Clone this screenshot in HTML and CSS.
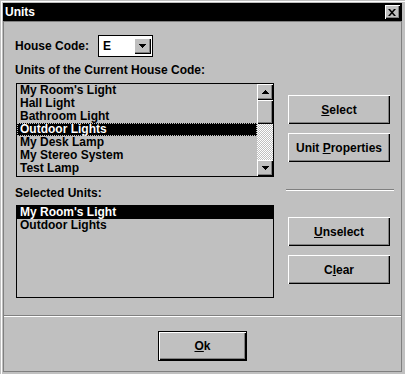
FILE: index.html
```html
<!DOCTYPE html>
<html lang="en">

<head>
  <meta charset="UTF-8" />
  <title>Units</title>

  <link rel="stylesheet" href="styles.css">
</head>

<body>
  <div class="window">
    <div class="titlebar">
      <span class="title">Units</span>
      <span class="close">
        <svg width="8" height="7" viewBox="0 0 8 7"><path d="M0 0h2l2 2.2L6 0h2L5 3.5 8 7H6L4 4.8 2 7H0l3-3.5z" /></svg>
      </span>
    </div>

    <div class="client">
      <div class="top">
        <div class="field-row">
          <span class="field-label">House Code:</span>
          <div class="combo">
            <span class="combo-value">E</span>
            <span class="raised drop">
              <svg width="7" height="4" viewBox="0 0 7 4" shape-rendering="crispEdges"><path d="M0 0h7v1H6v1H5v1H4v1H3V3H2V2H1V1H0z" /></svg>
            </span>
          </div>
        </div>

        <div class="caption">Units of the Current House Code:</div>
        <div class="pair pair-units">
          <div class="listbox list-units">
            <ul class="items">
              <li>My Room's Light</li>
              <li>Hall Light</li>
              <li>Bathroom Light</li>
              <li class="selected focused">Outdoor Lights</li>
              <li>My Desk Lamp</li>
              <li>My Stereo System</li>
              <li>Test Lamp</li>
            </ul>
            <div class="scrollbar">
              <span class="raised arrow">
                <svg width="7" height="4" viewBox="0 0 7 4" shape-rendering="crispEdges"><path d="M3 0h1v1h1v1h1v1h1v1H0V3h1V2h1V1h1z" /></svg>
              </span>
              <span class="raised thumb"></span>
              <span class="track"></span>
              <span class="raised arrow">
                <svg width="7" height="4" viewBox="0 0 7 4" shape-rendering="crispEdges"><path d="M0 0h7v1H6v1H5v1H4v1H3V3H2V2H1V1H0z" /></svg>
              </span>
            </div>
          </div>
          <div class="actions">
            <button class="raised btn"><u>S</u>elect</button>
            <button class="raised btn">Unit <u>P</u>roperties</button>
          </div>
        </div>

        <div class="pair caption-row">
          <div>Selected Units:</div>
          <div class="sep-short"></div>
        </div>
        <div class="pair pair-selected">
          <div class="listbox list-selected">
            <ul class="items">
              <li class="selected">My Room's Light</li>
              <li>Outdoor Lights</li>
            </ul>
          </div>
          <div class="actions">
            <button class="raised btn"><u>U</u>nselect</button>
            <button class="raised btn">C<u>l</u>ear</button>
          </div>
        </div>
      </div>

      <div class="bottom">
        <button class="raised btn btn-default"><u>O</u>k</button>
      </div>
    </div>
  </div>
</body>

</html>
```

FILE: styles.css
```css
* {
  box-sizing: border-box;
}

body {
  margin: 0;
  background-color: #c0c0c0;
  font-family: "Liberation Sans", Arial, sans-serif;
  font-size: 12px;
  font-weight: bold;
  color: #000;
}

.window {
  width: 405px;
  height: 374px;
  padding: 3px 3px 2px 3px;
  background-color: #c0c0c0;
  box-shadow: inset 1px 1px #c0c0c0, inset 2px 2px #fff;
}

.titlebar {
  height: 18px;
  padding: 0 2px;
  background-color: #000;
  color: #fff;
  display: flex;
  align-items: center;
  justify-content: space-between;
}

.title {
  line-height: 18px;
}

.raised {
  background-color: #c0c0c0;
  box-shadow: inset 1px 1px #fff, inset -1px -1px #000, inset -2px -2px #808080;
}

.close {
  width: 15px;
  height: 14px;
  display: flex;
  align-items: center;
  justify-content: center;
  background-color: #c0c0c0;
  box-shadow: inset 1px 1px #fff, inset -1px -1px #000, inset -2px -2px #808080;
}

.close svg {
  margin-left: -1px;
}

.client {
  height: 351px;
  border: 1px solid #808080;
  display: flex;
  flex-direction: column;
}

.top {
  height: 294px;
  padding: 13px 0 0 11px;
  border-bottom: 1px solid #808080;
}

.field-row {
  height: 22px;
  display: flex;
  align-items: center;
}

.field-label {
  width: 83px;
}

.combo {
  width: 55px;
  height: 22px;
  padding: 0 1px 0 4px;
  border: 1px solid #000;
  background-color: #fff;
  display: flex;
  align-items: center;
  justify-content: space-between;
}

.drop {
  width: 17px;
  height: 16px;
  display: flex;
  align-items: center;
  justify-content: center;
}

.caption {
  margin-top: 6px;
  line-height: 14px;
}

.pair {
  display: grid;
  grid-template-columns: 259px 102px;
  column-gap: 14px;
}

.pair-units {
  margin-top: 6px;
}

.pair-selected {
  margin-top: 5px;
}

.listbox {
  margin-left: 1px;
  border: 1px solid #000;
  display: flex;
}

.list-units {
  height: 94px;
}

.list-selected {
  height: 93px;
}

.items {
  flex: 1;
  margin: 0;
  padding: 0;
  list-style: none;
}

.items li {
  height: 13px;
  padding-left: 3px;
  line-height: 13px;
  white-space: nowrap;
}

.items .selected {
  background-color: #000;
  color: #fff;
}

.items .focused {
  outline: 1px dotted #c0c0c0;
  outline-offset: -1px;
}

.scrollbar {
  width: 16px;
  display: flex;
  flex-direction: column;
}

.arrow {
  height: 16px;
  display: flex;
  align-items: center;
  justify-content: center;
}

.thumb {
  height: 24px;
}

.track {
  flex: 1;
  background-image: conic-gradient(#fff 25%, #c0c0c0 0 50%, #fff 0 75%, #c0c0c0 0);
  background-size: 2px 2px;
}

.actions {
  padding-top: 12px;
  display: flex;
  flex-direction: column;
  gap: 9px;
}

.btn {
  height: 29px;
  padding: 0;
  border: none;
  font: inherit;
  color: #000;
}

.caption-row {
  margin-top: 9px;
  line-height: 14px;
}

.sep-short {
  height: 2px;
  margin: 3px -4px 0 -2px;
  border-top: 1px solid #808080;
  border-bottom: 1px solid #fff;
}

.bottom {
  flex: 1;
  padding-top: 14px;
  border-top: 1px solid #fff;
  display: flex;
  justify-content: center;
}

.btn-default {
  width: 89px;
  height: 30px;
  border: 1px solid #000;
}
```
